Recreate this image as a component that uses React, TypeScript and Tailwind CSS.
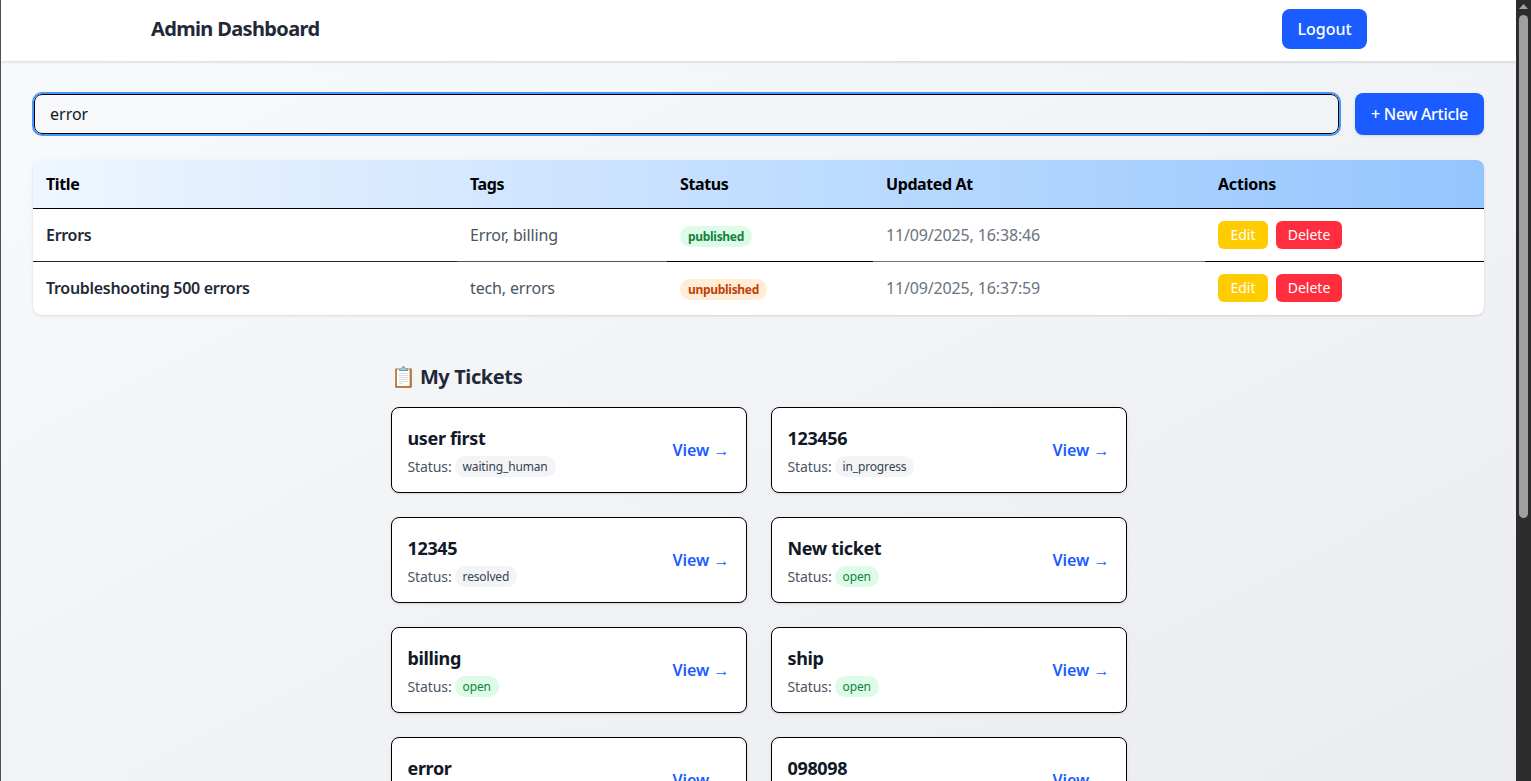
import React from 'react';

const articles = [
  { title: 'Errors', tags: 'Error, billing', status: 'published', updated: '11/09/2025, 16:38:46' },
  { title: 'Troubleshooting 500 errors', tags: 'tech, errors', status: 'unpublished', updated: '11/09/2025, 16:37:59' },
];

const tickets = [
  { title: 'user first', status: 'waiting_human' },
  { title: '123456', status: 'in_progress' },
  { title: '12345', status: 'resolved' },
  { title: 'New ticket', status: 'open' },
  { title: 'billing', status: 'open' },
  { title: 'ship', status: 'open' },
  { title: 'error', status: 'open' },
  { title: '098098', status: 'open' },
];

function TicketCard({ title, status }: { title: string; status: string }) {
  return (
    <div className="flex h-[86px] items-center justify-between rounded-lg border border-black bg-white pl-4 pr-4 shadow-sm">
      <div>
        <h3 className="text-lg leading-7 font-bold tracking-[-0.35px] text-[#111827]">{title}</h3>
        <p className="mt-1 flex items-center gap-[3px] text-sm leading-[21px] tracking-[-0.1px] text-[#4b5563]">
          Status:
          <span
            className={
              status === 'open'
                ? 'rounded-full bg-[#dcfce7] px-2 text-xs leading-[21px] tracking-[-0.15px] text-[#15803d]'
                : 'rounded-full bg-[#f3f4f6] px-2 text-xs leading-[21px] tracking-[-0.15px] text-[#374151]'
            }
          >
            {status}
          </span>
        </p>
      </div>
      <a className="text-base font-semibold text-[#1a5cff]">View →</a>
    </div>
  );
}

export default function App() {
  return (
    <div className="flex h-[781px] overflow-hidden font-['Noto_Sans',sans-serif]">
      <div className="h-full w-[1516px] shrink-0 overflow-hidden border-l border-[#4a5058] bg-gradient-to-br from-[#f9fafb] to-[#eaecf0]">
        <header className="flex h-[61px] items-start justify-between bg-white pr-[149px] pl-[150px] shadow-[0_1px_3px_rgba(0,0,0,0.15)]">
          <h1 className="mt-[15px] text-xl leading-7 font-bold tracking-[-0.65px] text-[#1f2937]">Admin Dashboard</h1>
          <button className="mt-[9px] h-10 w-[85px] rounded-lg bg-[#1a5cff] text-base font-medium text-white">Logout</button>
        </header>

        <main className="px-8 pt-8">
          <div className="flex items-center gap-[15px]">
            <input
              readOnly
              value="error"
              className="mx-px h-10 flex-1 rounded-lg border border-black bg-transparent pr-4 pl-[15px] text-base text-[#111827] outline-2 outline-[#4a96f8]"
            />
            <button className="h-[42px] w-[129px] rounded-lg bg-[#1a5cff] text-base font-medium tracking-[-0.3px] text-white shadow-sm">
              + New Article
            </button>
          </div>

          <div className="mt-[25px] overflow-hidden rounded-lg bg-white shadow-sm">
            <table className="w-full table-fixed border-collapse text-left text-base">
              <thead>
                <tr className="h-[48px] bg-gradient-to-r from-[#eff6ff] to-[#93c5fd]">
                  <th className="w-[424px] border-b border-black pr-3 pl-[13px] font-bold tracking-[-0.4px] text-black">Title</th>
                  <th className="w-[210px] border-b border-black pr-3 pl-[13px] font-bold tracking-[-0.4px] text-black">Tags</th>
                  <th className="w-[206px] border-b border-black pr-3 pl-[13px] font-bold tracking-[-0.4px] text-black">Status</th>
                  <th className="w-[332px] border-b border-black pr-3 pl-[13px] font-bold tracking-[-0.4px] text-black">Updated At</th>
                  <th className="border-b border-black pr-3 pl-[13px] font-bold tracking-[-0.2px] text-black">Actions</th>
                </tr>
              </thead>
              <tbody>
                {articles.map((a, i) => (
                  <tr key={a.title} className={i === 0 ? 'h-[53px]' : 'h-[54px]'}>
                    <td className={i === 0 ? 'border-b pr-3 pl-[13px] font-semibold tracking-[-0.3px] text-[#1f2937]' : 'pr-3 pl-[13px] font-semibold tracking-[-0.3px] text-[#1f2937]'}>{a.title}</td>
                    <td className={i === 0 ? 'border-b pr-3 pl-[13px] tracking-[-0.15px] text-[#4b5563]' : 'pr-3 pl-[13px] tracking-[-0.15px] text-[#4b5563]'}>{a.tags}</td>
                    <td className={i === 0 ? 'border-b border-black pr-3 pl-[13px]' : 'pr-3 pl-[13px]'}>
                      <span
                        className={
                          a.status === 'published'
                            ? 'inline-block rounded-full bg-[#dcfce7] px-2 text-xs leading-[21px] font-bold tracking-[-0.3px] text-[#15803d]'
                            : 'inline-block rounded-full bg-[#ffedd5] px-2 text-xs leading-[21px] font-bold tracking-[-0.3px] text-[#c2410c]'
                        }
                      >
                        {a.status}
                      </span>
                    </td>
                    <td className={i === 0 ? 'border-b pr-3 pl-[13px] tracking-[-0.15px] text-[#6b7280]' : 'pr-3 pl-[13px] tracking-[-0.15px] text-[#6b7280]'}>{a.updated}</td>
                    <td className={i === 0 ? 'border-b border-black pr-3 pl-[13px]' : 'pr-3 pl-[13px]'}>
                      <div className="flex gap-2">
                        <button className="h-7 w-[50px] rounded-md bg-[#ffcc00] text-sm text-white">Edit</button>
                        <button className="h-7 w-[66px] rounded-md bg-[#ff2d3d] text-sm text-white">Delete</button>
                      </div>
                    </td>
                  </tr>
                ))}
              </tbody>
            </table>
          </div>

          <section className="mx-auto mt-[46px] w-[736px]">
            <h2 className="mb-[14px] text-xl leading-8 font-bold tracking-[-0.4px] text-[#1f2937]">📋 My Tickets</h2>
            <div className="grid grid-cols-2 gap-6">
              {tickets.map((t) => (
                <TicketCard key={t.title} {...t} />
              ))}
            </div>
          </section>
        </main>
      </div>

      <div className="flex w-[15px] shrink-0 flex-col items-center bg-[#2c2c2c] pt-[3px]">
        <svg width="9" height="12" viewBox="0 0 9 12" className="shrink-0">
          <polygon points="4.5,1 9,6 0,6" fill="#a3a3a3" />
        </svg>
        <div className="h-[503px] w-[9px] rounded-full bg-[#9f9f9f]" />
      </div>
    </div>
  );
}
